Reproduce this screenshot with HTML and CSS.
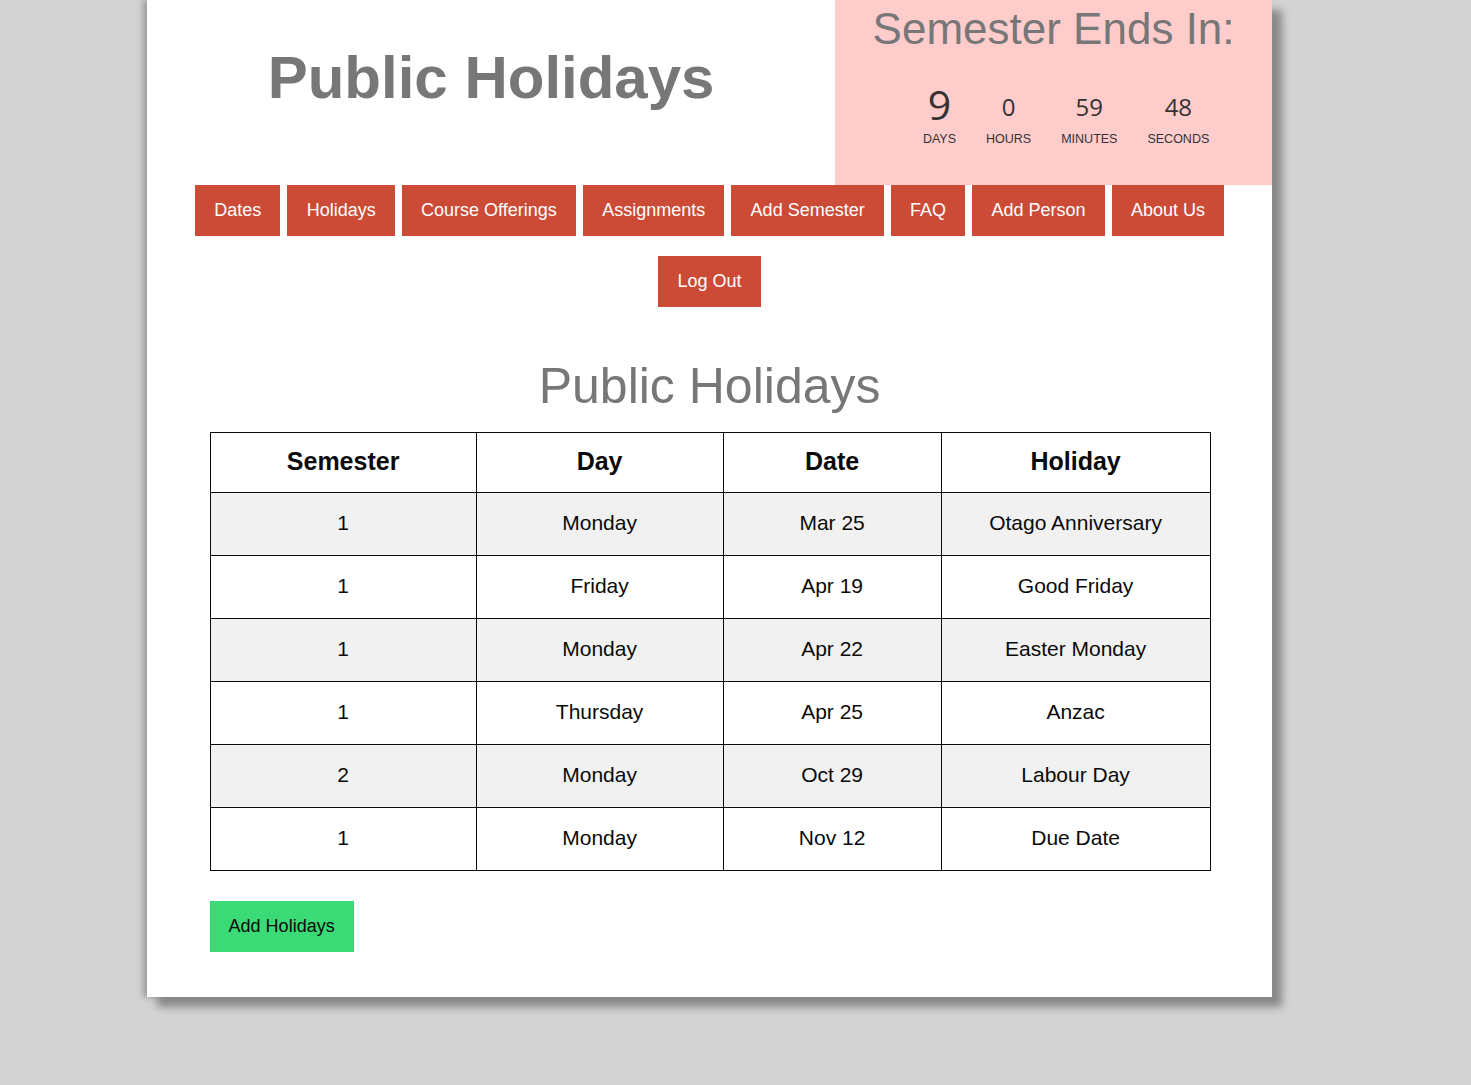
FILE: index.html
```html
<!DOCTYPE html>
<html lang="en">
<head>
<meta charset="utf-8">
<title>Public Holidays</title>
<link rel="stylesheet" href="styles.css">
</head>
<body>
<div class="page">
  <header class="top">
    <div class="brand">
      <h1 class="brand-title">Public Holidays</h1>
    </div>
    <div class="timer">
      <h2 class="timer-title">Semester Ends In:</h2>
      <div class="countdown">
        <div class="cd-item"><div class="cd-num cd-big">9</div><div class="cd-label">DAYS</div></div>
        <div class="cd-item"><div class="cd-num">0</div><div class="cd-label">HOURS</div></div>
        <div class="cd-item"><div class="cd-num">59</div><div class="cd-label">MINUTES</div></div>
        <div class="cd-item"><div class="cd-num">48</div><div class="cd-label">SECONDS</div></div>
      </div>
    </div>
  </header>
  <nav class="nav">
    <a class="nav-btn" href="#">Dates</a>
    <a class="nav-btn" href="#">Holidays</a>
    <a class="nav-btn" href="#">Course Offerings</a>
    <a class="nav-btn" href="#">Assignments</a>
    <a class="nav-btn" href="#">Add Semester</a>
    <a class="nav-btn" href="#">FAQ</a>
    <a class="nav-btn" href="#">Add Person</a>
    <a class="nav-btn" href="#">About Us</a>
    <a class="nav-btn" href="#">Log Out</a>
  </nav>
  <main class="content">
    <h2 class="section-title">Public Holidays</h2>
    <table class="holidays">
      <colgroup>
        <col class="col-sem">
        <col class="col-day">
        <col class="col-date">
        <col class="col-hol">
      </colgroup>
      <thead>
        <tr><th>Semester</th><th>Day</th><th>Date</th><th>Holiday</th></tr>
      </thead>
      <tbody>
        <tr><td>1</td><td>Monday</td><td>Mar 25</td><td>Otago Anniversary</td></tr>
        <tr><td>1</td><td>Friday</td><td>Apr 19</td><td>Good Friday</td></tr>
        <tr><td>1</td><td>Monday</td><td>Apr 22</td><td>Easter Monday</td></tr>
        <tr><td>1</td><td>Thursday</td><td>Apr 25</td><td>Anzac</td></tr>
        <tr><td>2</td><td>Monday</td><td>Oct 29</td><td>Labour Day</td></tr>
        <tr><td>1</td><td>Monday</td><td>Nov 12</td><td>Due Date</td></tr>
      </tbody>
    </table>
    <a class="add-btn" href="#">Add Holidays</a>
  </main>
</div>
</body>
</html>
```

FILE: styles.css
```css
html, body {
  margin: 0;
  padding: 0;
}
body {
  background: #d3d3d3;
  font-family: "Liberation Sans", Arial, sans-serif;
  min-height: 1085px;
}
.page {
  margin-left: 10%;
  width: 1125px;
  background: #fff;
  box-shadow: 10px 10px 8px #888, -4px 0 6px #9a9a9a;
  padding-bottom: 45px;
}
.top {
  display: flex;
  height: 185px;
}
.brand {
  flex: 1;
  text-align: center;
  padding-top: 43px;
}
.brand-title {
  margin: 0;
  font-size: 60px;
  line-height: 69px;
  font-weight: bold;
  color: #777;
}
.timer {
  width: 437px;
  background: #ffcccc;
  text-align: center;
}
.timer-title {
  margin: 0;
  padding-top: 4px;
  font-size: 44px;
  line-height: 50px;
  font-weight: normal;
  color: #777;
}
.countdown {
  display: flex;
  justify-content: center;
  align-items: flex-end;
  gap: 30px;
  margin-top: 27px;
  padding-left: 25px;
}
.cd-item {
  text-align: center;
}
.cd-num {
  font-family: "Open Sans", sans-serif;
  font-size: 24px;
  line-height: 42px;
  color: #333;
}
.cd-big {
  font-size: 41px;
  line-height: 47px;
}
.cd-label {
  font-size: 12.5px;
  line-height: 15px;
  padding-top: 4px;
  color: #333;
}
.nav {
  display: flex;
  flex-wrap: wrap;
  justify-content: center;
  gap: 20px 7px;
}
.nav-btn {
  display: block;
  background: #cc4b37;
  color: #fff;
  text-decoration: none;
  font-size: 18px;
  line-height: 21px;
  padding: 15px 19.2px;
}
.content {
  width: 1000px;
  margin: 0 auto;
}
.section-title {
  margin: 51px 0 17px;
  text-align: center;
  font-size: 50px;
  line-height: 57px;
  font-weight: normal;
  color: #777;
}
.holidays {
  width: 1000px;
  border-collapse: collapse;
  table-layout: fixed;
}
.col-sem { width: 266px; }
.col-day { width: 247px; }
.col-date { width: 218px; }
.col-hol { width: 269px; }
.holidays th,
.holidays td {
  border: 1px solid #0a0a0a;
  text-align: center;
  color: #0a0a0a;
}
.holidays th {
  font-size: 25px;
  line-height: 28px;
  font-weight: bold;
  padding: 14px 8px 17px;
}
.holidays td {
  font-size: 21px;
  line-height: 23px;
  padding: 18px 8px 21px;
}
.holidays tbody tr:nth-child(odd) {
  background: #f1f1f1;
}
.add-btn {
  display: inline-block;
  margin-top: 30px;
  background: #3adb76;
  color: #0a0a0a;
  text-decoration: none;
  font-size: 18px;
  line-height: 21px;
  padding: 15px 19px;
}
```
